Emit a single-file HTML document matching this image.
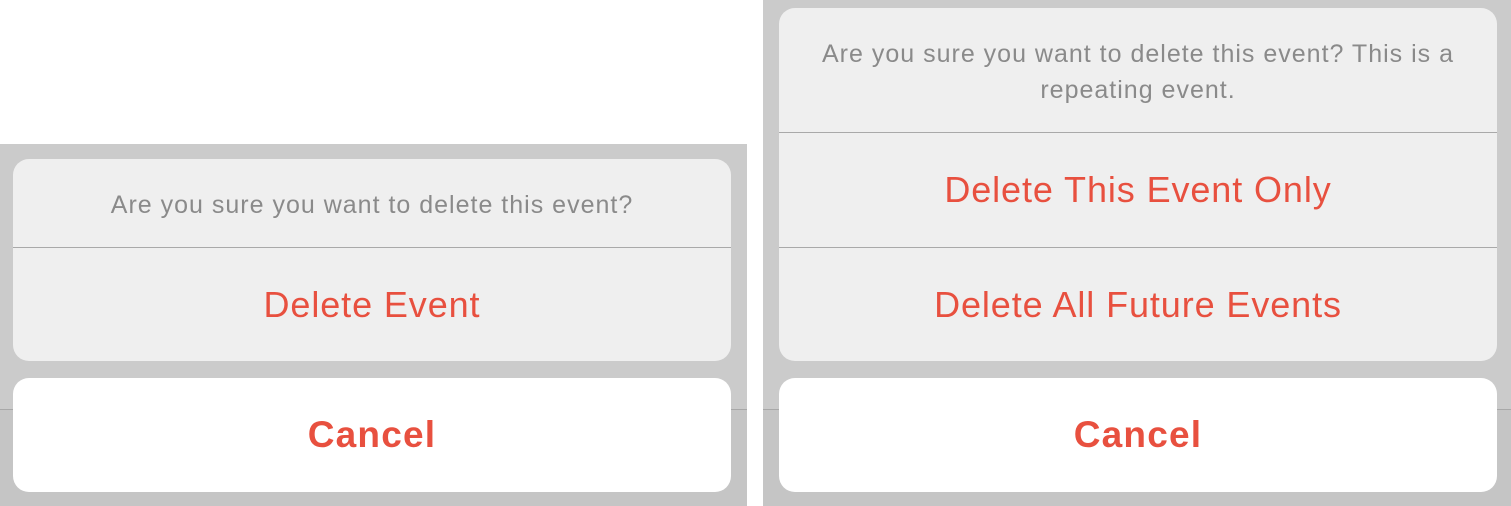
<!DOCTYPE html>
<html><head><style>
body{margin:0;width:1511px;height:505px;background:#fff;position:relative;overflow:hidden;font-family:"Liberation Sans",sans-serif}
.p{position:absolute;background:#cbcbcb}
.low{position:absolute;background:#c5c5c5;border-top:1px solid #a8a8a8}
.card{position:absolute;background:#efefef;border-radius:16px;overflow:hidden}
.row{position:absolute;left:0;right:0;display:flex;align-items:center;justify-content:center;text-align:center}
.msg{color:#8a8a8a;font-size:25px;letter-spacing:1px;line-height:36px}
.act{color:#e8503f;font-size:36px;letter-spacing:0.9px;border-top:1px solid #a9a9a9}
.cancel{position:absolute;background:#fff;border-radius:16px;color:#e8503f;font-size:37px;letter-spacing:1.2px;font-weight:bold;display:flex;align-items:center;justify-content:center}
</style></head><body>
<div class="p" style="left:0;top:144px;width:747px;height:361px"></div>
<div class="low" style="left:0;top:409px;width:747px;height:96px"></div>
<div class="card" style="left:13px;top:159px;width:718px;height:202px">
 <div class="row msg" style="top:2px;height:88px">Are you sure you want to delete this event?</div>
 <div class="row act" style="top:88px;height:114px">Delete Event</div>
</div>
<div class="cancel" style="left:13px;top:378px;width:718px;height:114px">Cancel</div>

<div class="p" style="left:763px;top:0;width:748px;height:505px"></div>
<div class="low" style="left:763px;top:409px;width:748px;height:96px"></div>
<div class="card" style="left:779px;top:8px;width:718px;height:353px">
 <div class="row msg" style="top:2px;height:124px;padding:0 30px">Are you sure you want to delete this event? This is a repeating event.</div>
 <div class="row act" style="top:124px;height:114px">Delete This Event Only</div>
 <div class="row act" style="top:239px;height:114px">Delete All Future Events</div>
</div>
<div class="cancel" style="left:779px;top:378px;width:718px;height:114px">Cancel</div>
</body></html>
